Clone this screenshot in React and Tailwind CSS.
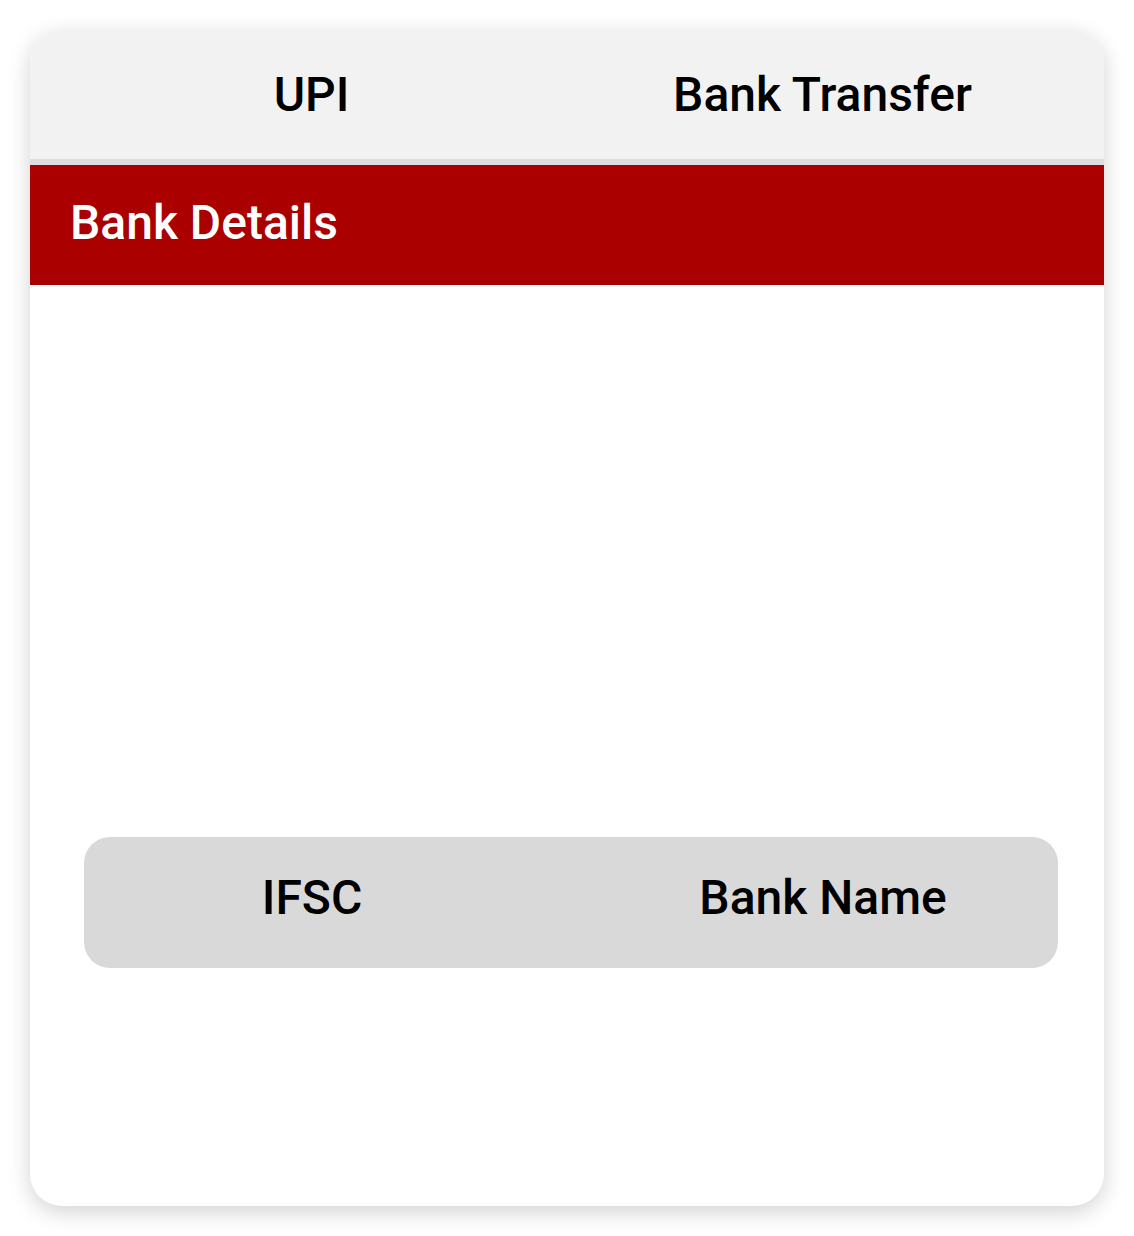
export default function App() {
  return (
    <div className="w-[1134px] h-[1236px] bg-white pt-[30px] pl-[30px]" style={{ fontFamily: 'Roboto, "Liberation Sans", sans-serif' }}>
      <div className="w-[1074px] h-[1176px] bg-white rounded-[32px] overflow-hidden shadow-[0_6px_22px_rgba(0,0,0,0.18)] flex flex-col">
        <div className="h-[135px] shrink-0 bg-[#f2f2f2] border-b-[6px] border-[#dedede] grid grid-cols-[511px_511px] justify-center items-center">
          <div className="text-center text-[48px] font-medium text-black leading-none">UPI</div>
          <div className="text-center text-[48px] font-medium text-black leading-none">Bank Transfer</div>
        </div>
        <div className="h-[120px] shrink-0 bg-[#aa0000] pl-[40px] pt-[22px]">
          <div className="text-[48px] font-medium text-white leading-normal">Bank Details</div>
        </div>
        <div className="pt-[552px] pl-[54px]">
          <div className="w-[974px] h-[131px] bg-[#d9d9d9] rounded-[26px] grid grid-cols-[456px_566px] items-center pb-[10px]">
            <div className="text-center text-[48px] font-medium text-black leading-none">IFSC</div>
            <div className="text-center text-[48px] font-medium text-black leading-none">Bank Name</div>
          </div>
        </div>
      </div>
    </div>
  );
}
